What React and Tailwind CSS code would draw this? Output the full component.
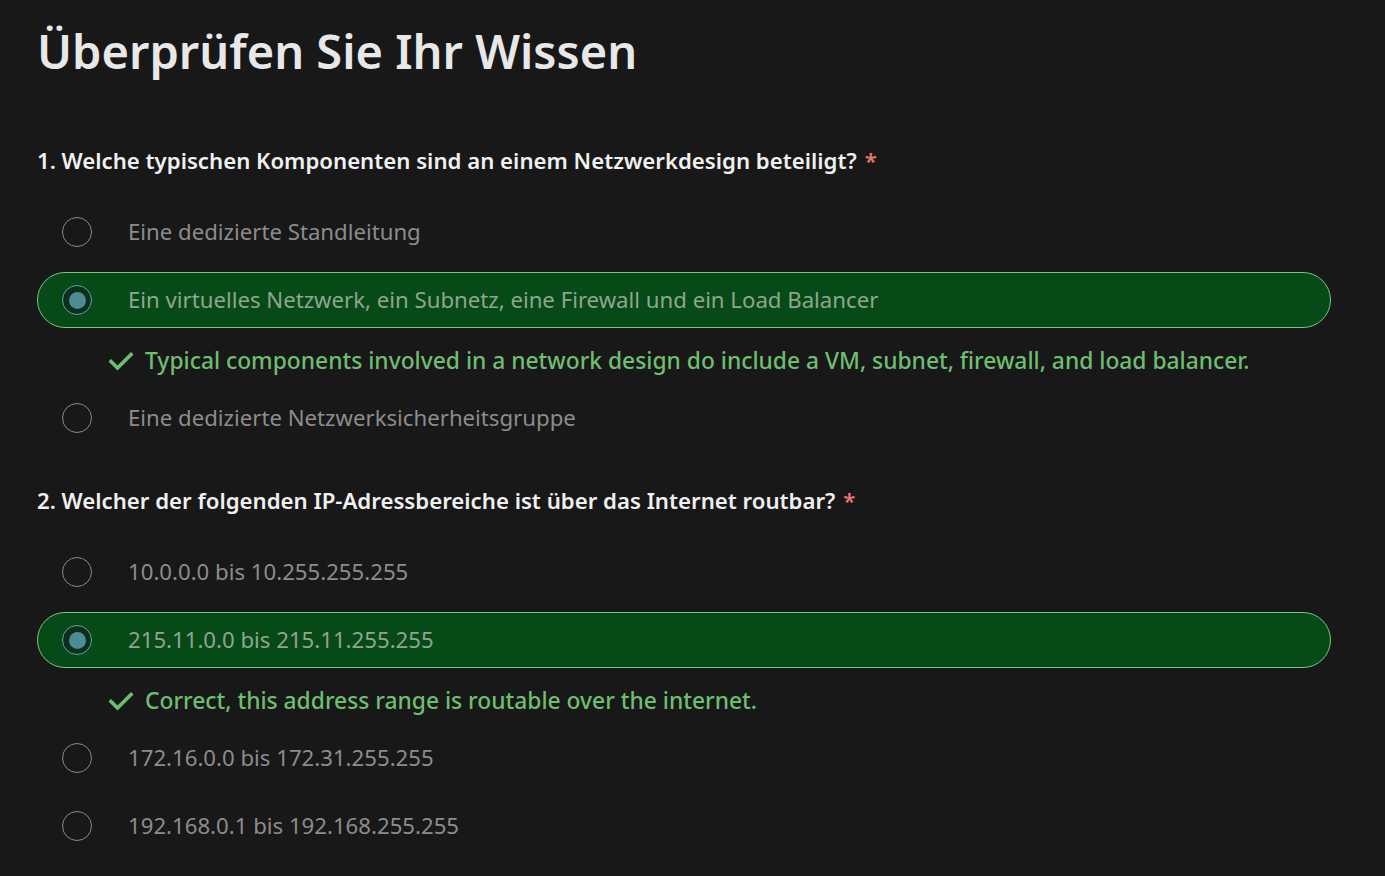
const QUESTIONS = [
  {
    title: "1. Welche typischen Komponenten sind an einem Netzwerkdesign beteiligt?",
    options: [
      "Eine dedizierte Standleitung",
      "Ein virtuelles Netzwerk, ein Subnetz, eine Firewall und ein Load Balancer",
      "Eine dedizierte Netzwerksicherheitsgruppe",
    ],
    selected: 1,
    feedback:
      "Typical components involved in a network design do include a VM, subnet, firewall, and load balancer.",
  },
  {
    title: "2. Welcher der folgenden IP-Adressbereiche ist über das Internet routbar?",
    options: [
      "10.0.0.0 bis 10.255.255.255",
      "215.11.0.0 bis 215.11.255.255",
      "172.16.0.0 bis 172.31.255.255",
      "192.168.0.1 bis 192.168.255.255",
    ],
    selected: 1,
    feedback: "Correct, this address range is routable over the internet.",
  },
];

function Radio({ checked }) {
  if (checked) {
    return (
      <span className="flex h-[30px] w-[30px] shrink-0 items-center justify-center rounded-full border border-[#5aa6ab] bg-[#0e2e1c]">
        <span className="h-[17px] w-[17px] rounded-full bg-[#4b8d92]" />
      </span>
    );
  }
  return <span className="h-[30px] w-[30px] shrink-0 rounded-full border-[1.5px] border-[#8a8a8a]" />;
}

function Check() {
  return (
    <svg width="26" height="22" viewBox="0 0 26 22" className="shrink-0">
      <path d="M3 11.5 L9.5 18 L23 4.5" fill="none" stroke="#6dbf6f" strokeWidth="3.6" strokeLinecap="square" />
    </svg>
  );
}

function Question({ q }) {
  return (
    <section className="mb-[40px]">
      <h2 className="flex h-[30px] items-center text-[22.2px] font-semibold text-[#f0f0f0]">
        {q.title}
        <span className="ml-[8px] text-[#e8756f]">*</span>
      </h2>
      <div className="mt-[28px] flex flex-col">
        {q.options.map((opt, i) => {
          const sel = i === q.selected;
          return (
            <div key={i} className={i < q.options.length - 1 ? "mb-[12px]" : ""}>
              <div
                className={
                  "flex h-[56px] items-center rounded-[28px] border pl-[24px] " +
                  (sel ? "border-[#7cc47f] bg-[#064a17]" : "border-transparent")
                }
              >
                <Radio checked={sel} />
                <span className={"ml-[36px] text-[22.2px] " + (sel ? "text-[#8fa58f]" : "text-[#8c8c8c]")}>
                  {opt}
                </span>
              </div>
              {sel && (
                <div className="mt-[18px] mb-[2px] flex h-[30px] items-center gap-[11px] pl-[71px] text-[22.8px] font-medium text-[#6dbf6f]">
                  <Check />
                  <span>{q.feedback}</span>
                </div>
              )}
            </div>
          );
        })}
      </div>
    </section>
  );
}

export default function App() {
  return (
    <div
      className="min-h-screen bg-[#181818] pl-[37px] pr-[54px] pt-[20px]"
      style={{ fontFamily: '"Noto Sans", "Open Sans", sans-serif' }}
    >
      <h1 className="flex h-[62px] items-center text-[47px] font-semibold text-[#e8e8e8]">
        Überprüfen Sie Ihr Wissen
      </h1>
      <div className="mt-[64px]">
        {QUESTIONS.map((q, i) => (
          <Question key={i} q={q} />
        ))}
      </div>
    </div>
  );
}
